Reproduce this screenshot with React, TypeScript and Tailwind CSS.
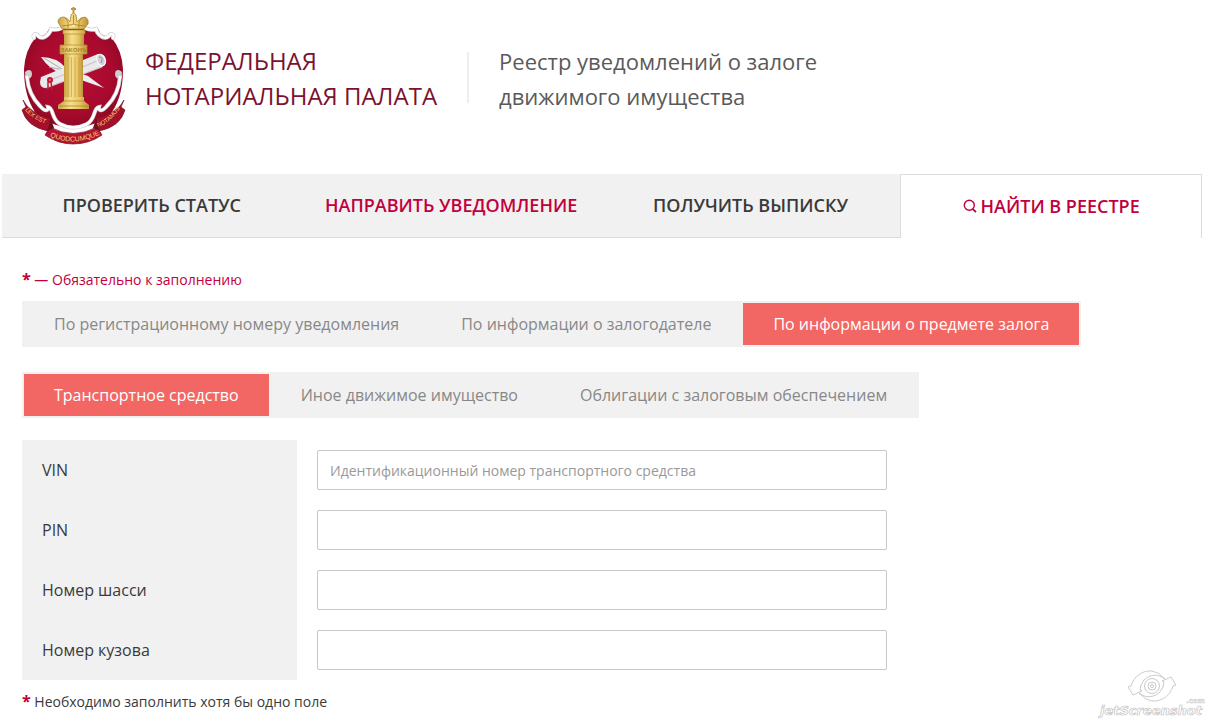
import { clsx } from 'clsx';

interface Tab {
  label: string;
  active?: boolean;
}

interface Field {
  id: string;
  label: string;
  placeholder?: string;
}

const searchTabs: Tab[] = [
  { label: 'По регистрационному номеру уведомления' },
  { label: 'По информации о залогодателе' },
  { label: 'По информации о предмете залога', active: true },
];

const propertyTabs: Tab[] = [
  { label: 'Транспортное средство', active: true },
  { label: 'Иное движимое имущество' },
  { label: 'Облигации с залоговым обеспечением' },
];

const fields: Field[] = [
  { id: 'vin', label: 'VIN', placeholder: 'Идентификационный номер транспортного средства' },
  { id: 'pin', label: 'PIN' },
  { id: 'chassis', label: 'Номер шасси' },
  { id: 'body', label: 'Номер кузова' },
];

const Emblem = () => (
  <svg viewBox="21 6 106 139" className="w-[106px] h-[139px] shrink-0" role="img" aria-label="Герб">
    <defs>
      <linearGradient id="gold" x1="0" x2="1" y1="0" y2="0">
        <stop offset="0" stopColor="#c9a040" />
        <stop offset="0.4" stopColor="#f7e08c" />
        <stop offset="0.7" stopColor="#e8c665" />
        <stop offset="1" stopColor="#bd9338" />
      </linearGradient>
      <radialGradient id="red" cx="0.5" cy="0.45" r="0.6">
        <stop offset="0" stopColor="#b90d35" />
        <stop offset="0.65" stopColor="#a80a2d" />
        <stop offset="1" stopColor="#8a0823" />
      </radialGradient>
      <path id="ribbonLeft" d="M25 110 Q33 121 56 127" />
      <path id="ribbonMid" d="M49 136 Q73 148 101 134" />
      <path id="ribbonRight" d="M98 127 Q114 122 126 98" />
    </defs>

    {/* Shield */}
    <path d="M49 29 Q73 24 98 29 Q101 37 111 37 Q122 50 123 69 Q123 96 112 112 Q100 126 73 128 Q47 126 35 112 Q24 96 24 69 Q25 50 36 37 Q46 37 49 29Z" fill="url(#red)" />
    <g fill="none" stroke="#cfcfd3" strokeWidth="4" strokeLinecap="round">
      <path d="M34 38 C32 35 36 32 38 36 C43 41 50 34 51 29 C57 31 60 29 62 28" />
      <path d="M113 38 C115 35 111 32 109 36 C104 41 97 34 96 29 C90 31 87 29 85 28" />
      <path d="M27 73 C31 69 31 78 27 77 C28 89 32 98 40 106 C46 113 49 110 48 107 C54 108 51 119 60 124 Q73 131 87 124 C96 119 93 108 99 107 C98 110 101 113 107 106 C115 98 119 89 120 77 C116 78 116 69 120 73" />
    </g>
    <g fill="none" stroke="#fff" strokeWidth="2.600" strokeLinecap="round">
      <path d="M34 38 C32 35 36 32 38 36 C43 41 50 34 51 29 C57 31 60 29 62 28" />
      <path d="M113 38 C115 35 111 32 109 36 C104 41 97 34 96 29 C90 31 87 29 85 28" />
      <path d="M27 77 C28 89 32 98 40 106 C46 113 49 110 48 107 C54 108 51 119 60 124 Q73 131 87 124 C96 119 93 108 99 107 C98 110 101 113 107 106 C115 98 119 89 120 77" />
    </g>

    {/* Quill and scroll */}
    <path d="M41 57 Q57 57 66 68 L88 76 L104 88 L84 81 L62 74 Q49 69 41 57Z" fill="#eeeef0" />
    <path d="M44 58 L65 71 M49 67 L63 70" stroke="#aaaab0" strokeWidth="1" />
    <path d="M41 77 L98 54 Q105 53 106 60 Q107 64 102 67 L46 88 Q40 88 40 82Z" fill="#e9e9ec" />
    <path d="M46 88 L102 67 M53 79 L97 61" stroke="#c4c4ca" strokeWidth="1.200" />
    <ellipse cx="101" cy="60" rx="4" ry="6" fill="#d0d0d5" stroke="#fff" transform="rotate(-20 101 60)" />
    <path d="M99 57 Q104 57 101 63" fill="none" stroke="#8e8e95" />
    <path d="M48 82 L48 90 M51 82 L52 90" stroke="#c31830" strokeWidth="1.500" />
    <circle cx="50" cy="80" r="3" fill="#c31830" />
    <circle cx="50" cy="80" r="1" fill="#ee7b7b" />

    {/* Column */}
    <path d="M64 54H83V99H64Z" fill="url(#gold)" />
    <path d="M68 57V97 M71.500 57V97 M75 57V97 M79 57V97" stroke="#b48a30" strokeWidth="0.700" opacity="0.700" />
    <path d="M64 97H84V101L89 105V109H58V105L64 101Z" fill="url(#gold)" />
    <path d="M63 101H85 M59 106H88" stroke="#aa7d24" strokeWidth="0.700" />
    <path d="M64 34H84V45H64Z" fill="url(#gold)" />
    <path d="M63 30H85V34H63Z M60 45H87V54H60Z" fill="url(#gold)" stroke="#b28b36" strokeWidth="0.700" />
    <text x="73.500" y="52" textAnchor="middle" fontSize="6" fontWeight="700" fill="#ab822e" className="font-['Open_Sans',sans-serif]">ЗАКОНЪ</text>

    {/* Crown */}
    <path d="M62 29 L58 22 Q58 17 64 17 Q68 18 70 22 L71 15 Q73 11 76 15 L77 22 Q80 17 85 17 Q89 19 88 24 L84 29Z" fill="url(#gold)" stroke="#9d772b" strokeWidth="0.700" />
    <path d="M73.500 7V13 M71 9H76" stroke="#c29638" strokeWidth="2" />
    <path d="M65 18 Q69 21 68 28 M82 18 Q78 21 79 28 M73.500 15V28 M62 26 Q73 23 85 26" fill="none" stroke="#a47c2c" strokeWidth="0.800" />
    <circle cx="73.500" cy="26" r="1.500" fill="#f9ecae" />

    {/* Ribbon */}
    <path d="M23 100 Q29 113 51 118 L48 131 Q27 127 22 110 L26 107Z" fill="#a40f2b" stroke="#791020" strokeWidth="0.700" />
    <path d="M124 100 Q118 113 96 118 L99 131 Q120 127 125 110 L121 107Z" fill="#a40f2b" stroke="#791020" strokeWidth="0.700" />
    <path d="M50 127 Q73 140 97 127 L102 135 Q89 144 73 144 Q58 144 45 135Z" fill="#b3142f" stroke="#791020" strokeWidth="0.700" />
    <path d="M51 119 L54 128 L47 131Z M96 119 L93 128 L100 131Z" fill="#740b1c" />
    <g fontSize="6" fill="#f3ce72" className="font-['Liberation_Sans',sans-serif]">
      <text><textPath href="#ribbonLeft">LEX EST</textPath></text>
      <text fontSize="7" textAnchor="middle"><textPath href="#ribbonMid" startOffset="50%">QUODCUMQUE</textPath></text>
      <text><textPath href="#ribbonRight">NOTAMUS</textPath></text>
    </g>
  </svg>
);

const SearchIcon = () => (
  <svg viewBox="0 0 14 14" className="w-3.5 h-3.5 shrink-0" fill="none" stroke="currentColor" strokeWidth="1.400" aria-hidden="true">
    <circle cx="6.300" cy="6.300" r="5" />
    <path d="M9.500 9.800 L13 13" strokeWidth="1.800" />
  </svg>
);

const TabBar = ({ tabs }: { tabs: Tab[] }) => (
  <div className="flex w-fit gap-0.5 bg-[#f1f1f1] p-0.5">
    {tabs.map((tab) => (
      <button
        key={tab.label}
        type="button"
        className={clsx(
          'h-[42px] px-[30px] text-base whitespace-nowrap',
          tab.active ? 'bg-[#f26763] text-white' : 'text-[#888]'
        )}
      >
        {tab.label}
      </button>
    ))}
  </div>
);

const Blade = () => (
  <path d="M33 17 C36 7 45 1 54 2 Q61 3 67 10 C60 4 51 6 46 11 Q42 16 42 21 L44 22 L35 26 L30 18Z" />
);

const Watermark = () => (
  <div className="absolute right-1 bottom-1">
    <svg viewBox="0 0 108 50" className="w-[108px] h-[50px]" fill="#fff" stroke="#c4c4c4" strokeWidth="0.900" aria-label="jetScreenshot.com">
      <Blade />
      <g transform="rotate(180 54 17)">
        <Blade />
      </g>
      <circle cx="54" cy="17" r="7.500" />
      <circle cx="54" cy="17" r="4" />
      <circle cx="54" cy="17" r="1.500" />
      <text x="2" y="46" fontSize="13" fontStyle="italic" fontWeight="700" strokeWidth="0.700" className="font-['DejaVu_Sans',sans-serif]">jetScreenshot</text>
      <text x="88" y="34" fontSize="7" fontWeight="700" strokeWidth="0.500" className="font-['DejaVu_Sans',sans-serif]">.com</text>
    </svg>
  </div>
);

const App = () => {
  return (
    <div className="relative min-h-screen bg-white pt-1.5 pr-2 pb-2 pl-0.5 font-['Open_Sans',sans-serif] text-[#3a3a3a]">
      <header className="flex items-start pl-[19px]">
        <Emblem />
        <p className="ml-[18px] mt-[37px] text-2xl leading-[35px] text-[#7a1230]">
          ФЕДЕРАЛЬНАЯ
          <br />
          НОТАРИАЛЬНАЯ ПАЛАТА
        </p>
        <h1 className="ml-[30px] mt-[38px] flex items-start text-[22px] leading-[35px] text-[#5a5a5a]">
          <span className="mt-2 mr-[30px] h-[51px] w-0.5 bg-[#eee]" />
          <span>
            Реестр уведомлений о залоге
            <br />
            движимого имущества
          </span>
        </h1>
      </header>

      <nav className="mt-[29px] grid grid-cols-[899fr_302fr] text-lg font-semibold whitespace-nowrap">
        <div className="grid grid-cols-3 border-b border-[#dcdcdc] bg-[#f1f1f1]">
          <a href="#status" className="flex h-[62px] items-center justify-center">
            ПРОВЕРИТЬ СТАТУС
          </a>
          <a href="#notify" className="flex h-[62px] items-center justify-center text-[#c2003d]">
            НАПРАВИТЬ УВЕДОМЛЕНИЕ
          </a>
          <a href="#extract" className="flex h-[62px] items-center justify-center">
            ПОЛУЧИТЬ ВЫПИСКУ
          </a>
        </div>
        <a href="#search" className="flex h-16 items-center justify-center gap-1 border-x border-t border-[#dcdcdc] pb-0.5 text-[#c2003d]">
          <SearchIcon />
          НАЙТИ В РЕЕСТРЕ
        </a>
      </nav>

      <main className="px-5 pt-8">
        <p className="text-sm leading-5 text-[#c2003d]">
          <b className="text-base leading-none">*</b> — Обязательно к заполнению
        </p>

        <div className="mt-[11px] flex flex-col gap-[25px]">
          <TabBar tabs={searchTabs} />
          <TabBar tabs={propertyTabs} />
        </div>

        <form className="mt-[22px] max-w-[865px]">
          {fields.map((field) => (
            <div key={field.id} className="flex h-[60px] items-center">
              <label htmlFor={field.id} className="flex h-full w-[275px] shrink-0 items-center bg-[#f1f1f1] pl-5 text-base">
                {field.label}
              </label>
              <input
                id={field.id}
                type="text"
                placeholder={field.placeholder}
                className="ml-5 h-10 min-w-0 flex-1 rounded-xs border border-[#c8c8c8] px-3 text-sm placeholder:text-[#999]"
              />
            </div>
          ))}
        </form>

        <p className="mt-3 text-sm leading-5">
          <b className="text-base leading-none text-[#c2003d]">*</b> Необходимо заполнить хотя бы одно поле
        </p>
      </main>

      <Watermark />
    </div>
  );
};

export default App;
